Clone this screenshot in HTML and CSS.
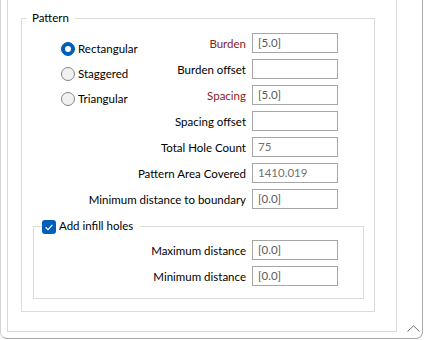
FILE: index.html
```html
<!DOCTYPE html>
<html lang="en">
<head>
    <meta charset="UTF-8">
    <title>Pattern</title>
    <link rel="stylesheet" href="styles.css">
</head>
<body>
    <div class="window">
        <div class="panel">
            <fieldset class="group pattern">
                <legend>Pattern</legend>
                <div class="pattern-body">
                    <div class="radios">
                        <div class="radio on"><span class="mark"></span>Rectangular</div>
                        <div class="radio"><span class="mark"></span>Staggered</div>
                        <div class="radio"><span class="mark"></span>Triangular</div>
                    </div>

                    <span class="label req">Burden</span>
                    <div class="box">[5.0]</div>
                    <span class="label">Burden offset</span>
                    <div class="box"></div>
                    <span class="label req">Spacing</span>
                    <div class="box">[5.0]</div>
                    <span class="label">Spacing offset</span>
                    <div class="box"></div>
                    <span class="label wide">Total Hole Count</span>
                    <div class="box ro">75</div>
                    <span class="label wide">Pattern Area Covered</span>
                    <div class="box ro">1410.019</div>
                    <span class="label wide">Minimum distance to boundary</span>
                    <div class="box">[0.0]</div>
                </div>

                <!-- infill -->
                <fieldset class="group infill">
                    <legend>
                        <span class="check">
                            <svg width="14" height="14" viewBox="0 0 14 14"><path d="M3.6 7.3 L6 9.6 L10.4 4.8" fill="none" stroke="#fff" stroke-width="1.2"/></svg>
                        </span>Add infill holes
                    </legend>
                    <div class="infill-body">
                        <span class="label">Maximum distance</span>
                        <div class="box">[0.0]</div>
                        <span class="label">Minimum distance</span>
                        <div class="box">[0.0]</div>
                    </div>
                </fieldset>
            </fieldset>
        </div>
        <div class="side">
            <svg width="13" height="7" viewBox="0 0 13 7"><path d="M0.5 6.5 L6.5 0.8 L12.5 6.5" fill="none" stroke="#707070" stroke-width="1"/></svg>
        </div>
    </div>
</body>
</html>
```

FILE: styles.css
```css
* {
    box-sizing: border-box;
}

body {
    margin: 0;
    font-family: "Segoe UI", Lato, "Liberation Sans", sans-serif;
    font-size: 11.5px;
    color: #000;
    background-color: #fff;
}

.window {
    width: 423px;
    height: 339px;
    display: flex;
    border: 1px solid #a8a8a8;
    border-top: none;
    border-left-color: #d4d4d4;
    border-radius: 0 0 7px 7px;
}

.panel {
    width: 390px;
    height: 332px;
    margin-left: 6px;
    border: 1px solid #d9d9d9;
    border-top: none;
}

.side {
    flex: 1;
    display: flex;
    align-items: flex-end;
    justify-content: flex-end;
    padding: 0 2px 6px 0;
}

.group {
    margin: 0;
    padding: 0;
    min-width: 0;
    border: 1px solid #dcdcdc;
}

legend {
    line-height: 16px;
}

.pattern {
    width: 354px;
    margin: 10px 0 0 13px;
    padding: 0 0 12px 0;
}

.pattern legend {
    margin-left: 5px;
    padding: 0 6px 0 5px;
}

.pattern-body {
    display: grid;
    grid-template-columns: auto 1fr 86px;
    grid-auto-rows: 20px;
    column-gap: 6px;
    row-gap: 6px;
    align-items: center;
    margin: 7px 36px 0 0;
}

.radios {
    grid-column: 1;
    grid-row: 1 / span 4;
    align-self: start;
    padding: 3px 0 0 39px;
}

.radio {
    height: 25px;
    display: flex;
    align-items: center;
    gap: 3px;
}

.mark {
    width: 14px;
    height: 14px;
    border-radius: 50%;
    border: 1px solid #858585;
    background-color: #f1f1f1;
}

.radio.on .mark {
    display: flex;
    align-items: center;
    justify-content: center;
    background-color: #005fb8;
    border-color: #005fb8;
}

.radio.on .mark::after {
    content: "";
    width: 6px;
    height: 6px;
    border-radius: 50%;
    background-color: #fff;
}

.label {
    grid-column: 2;
    text-align: right;
    white-space: nowrap;
}

.label.wide {
    grid-column: 1 / 3;
}

.req {
    color: #8a1a22;
}

.box {
    height: 20px;
    border: 1px solid #a6a6a6;
    padding-left: 5px;
    line-height: 18px;
    color: #595959;
}

.box.ro {
    color: #707070;
}

.infill {
    margin: 9px 10px 0 11px;
    padding: 6px 25px 12px 0;
}

.infill legend {
    margin-left: 8px;
    padding: 0 7px 0 0;
}

.check {
    display: inline-block;
    width: 14px;
    height: 14px;
    margin-right: 3px;
    vertical-align: middle;
    background-color: #005fb8;
    border-radius: 3px;
}

.check svg {
    display: block;
}

.infill-body {
    display: grid;
    grid-template-columns: 1fr 86px;
    grid-auto-rows: 20px;
    column-gap: 6px;
    row-gap: 6px;
    align-items: center;
}

.infill-body .label {
    grid-column: 1;
}
```
